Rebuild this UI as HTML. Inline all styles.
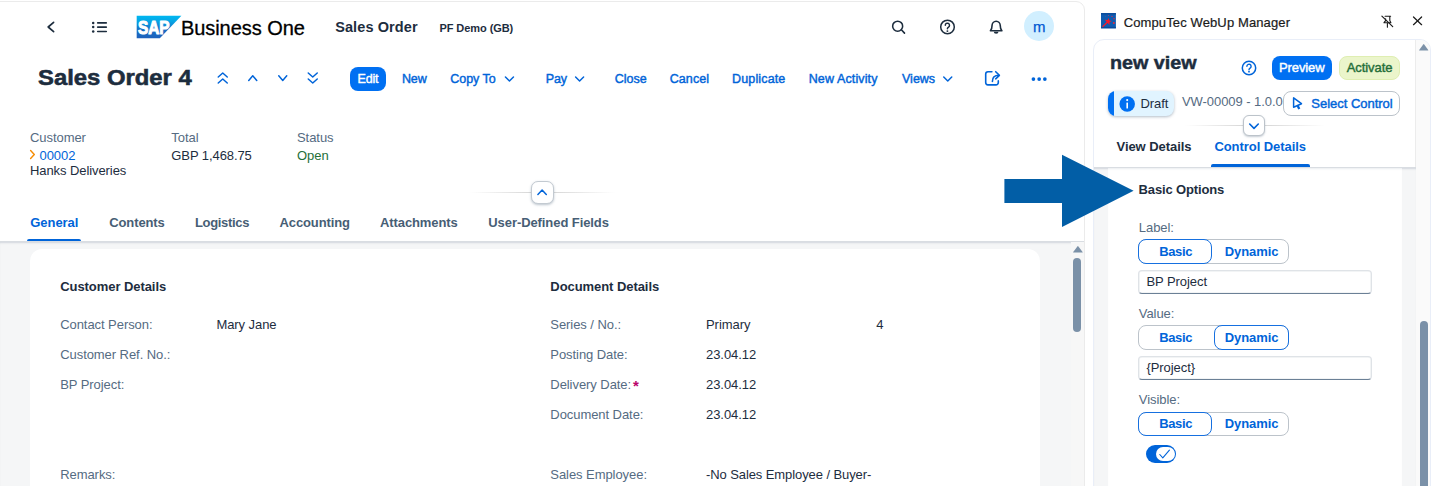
<!DOCTYPE html>
<html><head><meta charset="utf-8"><title>Sales Order</title>
<style>
html,body{margin:0;padding:0;}
body{width:1439px;height:486px;overflow:hidden;position:relative;background:#fff;font-family:"Liberation Sans",sans-serif;}
.b{position:absolute;display:block;}
.t{position:absolute;display:block;white-space:nowrap;line-height:1;letter-spacing:-0.06px;}
svg{overflow:visible;}
</style></head><body>
<div class="b" id="main" style="left:-2px;top:1px;width:1085px;height:600px;background:#fff;border:1px solid #ebebeb;border-top-right-radius:9px;"></div>
<svg class="b" style="left:40px;top:15px;" width="24" height="24" viewBox="0 0 24 24"><polyline points="13.6,7.4 8.2,12 13.6,16.6" fill="none" stroke="#1d2d3e" stroke-width="1.7" stroke-linecap="round" stroke-linejoin="round"/></svg>
<svg class="b" style="left:88px;top:15px;" width="24" height="24" viewBox="0 0 24 24"><g fill="#1d2d3e"><circle cx="5.2" cy="7.9" r="1.25"/><circle cx="5.2" cy="12.1" r="1.25"/><circle cx="5.2" cy="16.4" r="1.25"/></g><g stroke="#1d2d3e" stroke-width="1.6" stroke-linecap="round"><line x1="9.7" y1="7.9" x2="18.3" y2="7.9"/><line x1="9.7" y1="12.15" x2="18.3" y2="12.15"/><line x1="9.7" y1="16.45" x2="18.3" y2="16.45"/></g></svg>
<svg class="b" style="left:136px;top:15px;" width="47" height="24" viewBox="0 0 47 24"><defs><linearGradient id="sg" x1="0" y1="0" x2="0" y2="1"><stop offset="0" stop-color="#00b8f1"/><stop offset="0.25" stop-color="#06a5e5"/><stop offset="0.6" stop-color="#1870c5"/><stop offset="1" stop-color="#1d61bc"/></linearGradient></defs><polygon points="0.7,0.8 45.4,0.8 23.8,23.3 0.7,23.3" fill="url(#sg)"/><text x="1.9" y="19.0" font-family="Liberation Sans, sans-serif" font-weight="bold" font-size="17.6" fill="#fff" textLength="31.6" lengthAdjust="spacingAndGlyphs" stroke="#fff" stroke-width="1.0" stroke-linejoin="round">SAP</text></svg>
<span class="t" style="left:180.90px;top:17.57px;font-size:20px;color:#000;letter-spacing:-0.05px;-webkit-text-stroke:0.3px #000;">Business One</span>
<span class="t" style="left:335.20px;top:19.83px;font-size:14.5px;color:#1d2d3e;font-weight:bold;letter-spacing:0.1px;">Sales Order</span>
<span class="t" style="left:439.40px;top:22.79px;font-size:11px;color:#1d2d3e;font-weight:bold;">PF Demo (GB)</span>
<svg class="b" style="left:888px;top:15px;" width="24" height="24" viewBox="0 0 24 24"><circle cx="9.65" cy="11.15" r="5.0" fill="none" stroke="#1d2d3e" stroke-width="1.55"/><line x1="13.4" y1="14.8" x2="16.5" y2="18.1" stroke="#1d2d3e" stroke-width="1.6" stroke-linecap="round"/></svg>
<svg class="b" style="left:935px;top:15px;" width="24" height="24" viewBox="0 0 24 24"><circle cx="12.5" cy="11.95" r="6.8" fill="none" stroke="#1d2d3e" stroke-width="1.5"/><path d="M10.3 10.3 a2.1 2.1 0 1 1 3.25 1.75 c-0.85 0.55 -1.15 0.95 -1.15 1.75" fill="none" stroke="#1d2d3e" stroke-width="1.45" stroke-linecap="round"/><circle cx="12.4" cy="16.1" r="0.95" fill="#1d2d3e"/></svg>
<svg class="b" style="left:984px;top:15px;" width="24" height="24" viewBox="0 0 24 24"><path d="M6.4 15.8 C7.9 14.3 8.05 13 8.05 10.6 A4.1 4.4 0 0 1 16.25 10.6 C16.25 13 16.4 14.3 17.9 15.8 Z" fill="none" stroke="#1d2d3e" stroke-width="1.6" stroke-linejoin="round"/><path d="M9.8 16.7 A2.35 2.1 0 0 0 14.5 16.7 Z" fill="#1d2d3e"/></svg>
<div class="b" style="left:1023.7px;top:11.3px;width:30.2px;height:30.2px;border-radius:50%;background:#d1efff;"></div>
<span class="t" style="left:1033.00px;top:18.60px;font-size:15px;color:#0057d2;-webkit-text-stroke:0.25px #0057d2;">m</span>
<span class="t" style="left:38.20px;top:67.05px;font-size:21.2px;color:#1d2d3e;font-weight:bold;letter-spacing:0;transform:scaleX(1.125);transform-origin:0 0;-webkit-text-stroke:0.55px #1d2d3e;">Sales Order 4</span>
<svg class="b" style="left:0px;top:0px;pointer-events:none;" width="1085" height="120" viewBox="0 0 1085 120"><polyline points="218.25,77.00 222.75,73.00 227.25,77.00" fill="none" stroke="#0064d9" stroke-width="1.5" stroke-linecap="round" stroke-linejoin="round"/><polyline points="218.25,83.00 222.75,79.00 227.25,83.00" fill="none" stroke="#0064d9" stroke-width="1.5" stroke-linecap="round" stroke-linejoin="round"/><polyline points="248.75,80.40 252.75,75.80 256.75,80.40" fill="none" stroke="#0064d9" stroke-width="1.5" stroke-linecap="round" stroke-linejoin="round"/><polyline points="278.75,75.80 282.75,80.40 286.75,75.80" fill="none" stroke="#0064d9" stroke-width="1.5" stroke-linecap="round" stroke-linejoin="round"/><polyline points="308.25,73.00 312.75,77.00 317.25,73.00" fill="none" stroke="#0064d9" stroke-width="1.5" stroke-linecap="round" stroke-linejoin="round"/><polyline points="308.25,79.00 312.75,83.00 317.25,79.00" fill="none" stroke="#0064d9" stroke-width="1.5" stroke-linecap="round" stroke-linejoin="round"/><polyline points="505.45,77.05 509.45,80.95 513.45,77.05" fill="none" stroke="#0064d9" stroke-width="1.5" stroke-linecap="round" stroke-linejoin="round"/><polyline points="575.60,77.05 579.60,80.95 583.60,77.05" fill="none" stroke="#0064d9" stroke-width="1.5" stroke-linecap="round" stroke-linejoin="round"/><polyline points="943.75,77.05 947.75,80.95 951.75,77.05" fill="none" stroke="#0064d9" stroke-width="1.5" stroke-linecap="round" stroke-linejoin="round"/></svg>
<div class="b" style="left:349.6px;top:66.8px;width:36.8px;height:24.5px;border-radius:8px;background:#0070f2;"></div>
<span class="t" style="left:357.50px;top:72.92px;font-size:12.5px;color:#fff;-webkit-text-stroke:0.42px currentColor;letter-spacing:-0.2px;">Edit</span>
<span class="t" style="left:401.90px;top:72.92px;font-size:12.5px;color:#0064d9;-webkit-text-stroke:0.42px currentColor;letter-spacing:-0.1px;">New</span>
<span class="t" style="left:450.20px;top:72.92px;font-size:12.5px;color:#0064d9;-webkit-text-stroke:0.42px currentColor;letter-spacing:0px;">Copy To</span>
<span class="t" style="left:545.80px;top:72.92px;font-size:12.5px;color:#0064d9;-webkit-text-stroke:0.42px currentColor;letter-spacing:-0.2px;">Pay</span>
<span class="t" style="left:614.70px;top:72.92px;font-size:12.5px;color:#0064d9;-webkit-text-stroke:0.42px currentColor;letter-spacing:0px;">Close</span>
<span class="t" style="left:669.70px;top:72.92px;font-size:12.5px;color:#0064d9;-webkit-text-stroke:0.42px currentColor;letter-spacing:0.1px;">Cancel</span>
<span class="t" style="left:732.00px;top:72.92px;font-size:12.5px;color:#0064d9;-webkit-text-stroke:0.42px currentColor;letter-spacing:0.15px;">Duplicate</span>
<span class="t" style="left:808.70px;top:72.92px;font-size:12.5px;color:#0064d9;-webkit-text-stroke:0.42px currentColor;letter-spacing:0.12px;">New Activity</span>
<span class="t" style="left:902.00px;top:72.92px;font-size:12.5px;color:#0064d9;-webkit-text-stroke:0.42px currentColor;letter-spacing:0px;">Views</span>
<svg class="b" style="left:982px;top:68px;" width="20" height="20" viewBox="0 0 20 20"><path d="M9.9 3.8 H6 a2.3 2.3 0 0 0 -2.3 2.3 V14.6 a2.3 2.3 0 0 0 2.3 2.3 H14 a2.3 2.3 0 0 0 2.3 -2.3 V12.9" fill="none" stroke="#0064d9" stroke-width="1.6" stroke-linecap="round"/><path d="M10.4 13.4 C10.4 9.4 12.6 7.3 17 7.3 M13.7 3.7 L17.4 7.3 L13.7 10.8" fill="none" stroke="#0064d9" stroke-width="1.6" stroke-linecap="round" stroke-linejoin="round"/></svg>
<svg class="b" style="left:1029px;top:73px;" width="20" height="12" viewBox="0 0 20 12"><g fill="#0064d9"><circle cx="4.4" cy="6.05" r="1.85"/><circle cx="10.15" cy="6.05" r="1.85"/><circle cx="15.85" cy="6.05" r="1.85"/></g></svg>
<span class="t" style="left:30.00px;top:130.80px;font-size:13px;color:#556b82;">Customer</span>
<span class="t" style="left:171.30px;top:130.80px;font-size:13px;color:#556b82;">Total</span>
<span class="t" style="left:297.00px;top:130.80px;font-size:13px;color:#556b82;">Status</span>
<svg class="b" style="left:29px;top:149px;" width="8" height="12" viewBox="0 0 8 12"><polyline points="1.6,1.6 5.3,5.6 1.6,9.6" fill="none" stroke="#f58b00" stroke-width="1.4" stroke-linecap="round" stroke-linejoin="round"/></svg>
<span class="t" style="left:39.50px;top:149.00px;font-size:13px;color:#0064d9;">00002</span>
<span class="t" style="left:171.30px;top:149.00px;font-size:13px;color:#1d2d3e;letter-spacing:-0.08px;">GBP 1,468.75</span>
<span class="t" style="left:297.00px;top:149.00px;font-size:13px;color:#256f3a;">Open</span>
<span class="t" style="left:30.00px;top:164.00px;font-size:13px;color:#1d2d3e;letter-spacing:-0.08px;">Hanks Deliveries</span>
<div class="b" style="left:470px;top:191.8px;width:145px;height:1px;background:linear-gradient(90deg,rgba(217,217,217,0),#d9d9d9 40%,#d9d9d9 60%,rgba(217,217,217,0));"></div>
<div class="b" style="left:531.2px;top:181.2px;width:22.4px;height:22.4px;box-sizing:border-box;border:1px solid #c3cad1;border-radius:7px;background:#fff;box-shadow:0 1px 2.5px rgba(85,107,130,.4);"></div>
<svg class="b" style="left:531.3px;top:181.3px;" width="22" height="22" viewBox="0 0 22 22"><polyline points="6.90,13.50 11.10,9.10 15.30,13.50" fill="none" stroke="#0064d9" stroke-width="1.5" stroke-linecap="round" stroke-linejoin="round"/></svg>
<span class="t" style="left:30.30px;top:215.70px;font-size:13px;color:#0064d9;font-weight:bold;">General</span>
<span class="t" style="left:109.20px;top:215.70px;font-size:13px;color:#475e75;font-weight:bold;letter-spacing:-0.1px;">Contents</span>
<span class="t" style="left:195.00px;top:215.70px;font-size:13px;color:#475e75;font-weight:bold;letter-spacing:-0.33px;">Logistics</span>
<span class="t" style="left:279.50px;top:215.70px;font-size:13px;color:#475e75;font-weight:bold;letter-spacing:-0.12px;">Accounting</span>
<span class="t" style="left:380.00px;top:215.70px;font-size:13px;color:#475e75;font-weight:bold;letter-spacing:-0.1px;">Attachments</span>
<span class="t" style="left:488.30px;top:215.70px;font-size:13px;color:#475e75;font-weight:bold;letter-spacing:-0.08px;">User-Defined Fields</span>
<div class="b" style="left:27.2px;top:238.6px;width:54.2px;height:2.6px;background:#0064d9;border-radius:2px 2px 0 0;"></div>
<div class="b" style="left:0px;top:240.8px;width:1084px;height:260px;background:#f5f6f7;box-shadow:inset 0 2px 2px -1px rgba(85,107,130,.22);border-top:1px solid #d9dde2;box-sizing:border-box;"></div>
<div class="b" style="left:30px;top:249px;width:1010px;height:260px;background:#fff;border-radius:12px;"></div>
<div class="b" style="left:1071px;top:242px;width:13px;height:260px;background:#f7f7f7;"></div>
<svg class="b" style="left:1071px;top:244px;" width="13" height="10" viewBox="0 0 13 10"><path d="M2.2 8 L6.4 2.4 Q6.9 1.8 7.4 2.4 L11.6 8 Q11.9 8.5 11.2 8.5 H2.6 Q1.9 8.5 2.2 8 z" fill="#7b91a8"/></svg>
<div class="b" style="left:1073px;top:258.4px;width:8px;height:73.3px;background:#7b91a8;border-radius:4px;"></div>
<span class="t" style="left:60.20px;top:280.10px;font-size:13px;color:#1d2d3e;font-weight:bold;">Customer Details</span>
<span class="t" style="left:60.20px;top:318.10px;font-size:13px;color:#556b82;">Contact Person:</span>
<span class="t" style="left:216.40px;top:318.10px;font-size:13px;color:#1d2d3e;">Mary Jane</span>
<span class="t" style="left:60.20px;top:347.90px;font-size:13px;color:#556b82;">Customer Ref. No.:</span>
<span class="t" style="left:60.20px;top:377.60px;font-size:13px;color:#556b82;">BP Project:</span>
<span class="t" style="left:60.20px;top:467.90px;font-size:13px;color:#556b82;">Remarks:</span>
<span class="t" style="left:550.30px;top:280.10px;font-size:13px;color:#1d2d3e;font-weight:bold;">Document Details</span>
<span class="t" style="left:550.30px;top:318.10px;font-size:13px;color:#556b82;">Series / No.:</span>
<span class="t" style="left:706.00px;top:318.10px;font-size:13px;color:#1d2d3e;">Primary</span>
<span class="t" style="left:876.30px;top:318.10px;font-size:13px;color:#1d2d3e;">4</span>
<span class="t" style="left:550.30px;top:347.90px;font-size:13px;color:#556b82;">Posting Date:</span>
<span class="t" style="left:706.00px;top:347.90px;font-size:13px;color:#1d2d3e;">23.04.12</span>
<span class="t" style="left:550.30px;top:377.60px;font-size:13px;color:#556b82;">Delivery Date:</span>
<span class="t" style="left:633.00px;top:377.70px;font-size:15px;color:#ba066c;font-weight:bold;">*</span>
<span class="t" style="left:706.00px;top:377.60px;font-size:13px;color:#1d2d3e;">23.04.12</span>
<span class="t" style="left:550.30px;top:407.60px;font-size:13px;color:#556b82;">Document Date:</span>
<span class="t" style="left:706.00px;top:407.60px;font-size:13px;color:#1d2d3e;">23.04.12</span>
<span class="t" style="left:550.30px;top:467.90px;font-size:13px;color:#556b82;">Sales Employee:</span>
<span class="t" style="left:706.00px;top:467.90px;font-size:13px;color:#1d2d3e;letter-spacing:-0.09px;">-No Sales Employee / Buyer-</span>
<svg class="b" style="left:1101px;top:13px;" width="16" height="16" viewBox="0 0 16 16"><rect x="0" y="0.1" width="14.9" height="15.2" fill="#0f5bb0"/><rect x="0" y="0.1" width="14.9" height="1.4" fill="#0b4a9a"/><rect x="0" y="13.9" width="14.9" height="1.4" fill="#0b4a9a"/><polygon points="7.87,4.88 8.29,7.43 10.78,8.11 8.49,9.30 8.60,11.88 6.77,10.07 4.35,10.98 5.51,8.67 3.90,6.65 6.45,7.04" fill="#f5192a"/><line x1="5.6" y1="10" x2="1.5" y2="13.8" stroke="#f5192a" stroke-width="1.2"/><circle cx="13.1" cy="5.7" r="0.75" fill="#e8283a"/><circle cx="12.8" cy="9.9" r="1.0" fill="#e8283a"/><circle cx="11" cy="3.4" r="0.7" fill="#d83048"/><circle cx="7.6" cy="2.5" r="0.5" fill="#c83a58"/><circle cx="4.7" cy="3.3" r="0.4" fill="#a04070"/></svg>
<span class="t" style="left:1123.70px;top:15.50px;font-size:13px;color:#1b1b1b;letter-spacing:0.12px;-webkit-text-stroke:0.2px #1b1b1b;">CompuTec WebUp Manager</span>
<svg class="b" style="left:1378px;top:12px;" width="20" height="20" viewBox="0 0 20 20"><g fill="none" stroke="#1b1b1b" stroke-width="1.1" stroke-linecap="round" stroke-linejoin="round"><path d="M7.1 4.2 H12.6 M11.8 4.2 V8.6 L12.9 10.7 H6 L7.6 8.6 V6.8 M9.4 10.7 V15.3"/><line x1="3.9" y1="4.1" x2="14.7" y2="14.6" stroke-width="1.2"/></g></svg>
<svg class="b" style="left:1410px;top:13px;" width="16" height="16" viewBox="0 0 16 16"><g stroke="#1b1b1b" stroke-width="1.25" stroke-linecap="round"><line x1="3.5" y1="4" x2="11.6" y2="11.7"/><line x1="11.6" y1="4" x2="3.5" y2="11.7"/></g></svg>
<div class="b" id="inner" style="left:1093px;top:39px;width:337.6px;height:470px;box-sizing:border-box;border:1px solid #e9eef8;border-radius:11px 11px 0 0;background:#fff;overflow:hidden;"><div style="position:absolute;left:321.4px;top:0;width:15px;height:100%;background:#fafafa;border-left:1px solid #ececec;box-sizing:border-box;"></div></div>
<div class="b" style="left:1094px;top:166.6px;width:321.5px;height:330px;background:#f5f6f7;border-top:1px solid #d9dde2;box-sizing:border-box;box-shadow:inset 0 2px 2px -1px rgba(85,107,130,.22);"></div>
<div class="b" style="left:1108.3px;top:167.6px;width:293.5px;height:330px;background:#fff;box-shadow:inset 0 2px 2px -1px rgba(85,107,130,.12);"></div>
<svg class="b" style="left:1417px;top:42px;" width="13" height="10" viewBox="0 0 13 10"><path d="M2.2 8 L6.2 2.4 Q6.7 1.8 7.2 2.4 L11.2 8 Q11.5 8.5 10.8 8.5 H2.6 Q1.9 8.5 2.2 8 z" fill="#7b91a8"/></svg>
<div class="b" style="left:1419.8px;top:321px;width:7.8px;height:180px;background:#7b91a8;border-radius:4px;"></div>
<span class="t" style="left:1109.50px;top:53.79px;font-size:18.2px;color:#1d2d3e;font-weight:bold;letter-spacing:0;transform:scaleX(1.085);transform-origin:0 0;-webkit-text-stroke:0.45px #1d2d3e;">new view</span>
<svg class="b" style="left:1240px;top:59px;" width="18" height="18" viewBox="0 0 18 18"><circle cx="9" cy="9" r="6.7" fill="none" stroke="#0064d9" stroke-width="1.5"/><path d="M6.9 7.3 a2.1 2.1 0 1 1 3.2 1.8 c-0.8 0.5 -1.1 0.9 -1.1 1.7" fill="none" stroke="#0064d9" stroke-width="1.4" stroke-linecap="round"/><circle cx="9" cy="12.7" r="0.9" fill="#0064d9"/></svg>
<div class="b" style="left:1271.6px;top:55.8px;width:60.3px;height:24.4px;border-radius:8px;background:#0070f2;"></div>
<span class="t" style="left:1279.00px;top:61.20px;font-size:13px;color:#fff;-webkit-text-stroke:0.42px currentColor;letter-spacing:-0.1px;">Preview</span>
<div class="b" style="left:1339px;top:55.8px;width:61.2px;height:24.4px;border-radius:8px;background:#ebf5cb;box-sizing:border-box;border:1px solid #dfeeb2;"></div>
<span class="t" style="left:1346.70px;top:61.20px;font-size:13px;color:#256f3a;-webkit-text-stroke:0.42px currentColor;letter-spacing:-0.06px;">Activate</span>
<div class="b" style="left:1108.2px;top:91.3px;width:66px;height:24.5px;border-radius:8px;background:#e1f4ff;box-shadow:0 1px 3px rgba(85,107,130,.45);overflow:hidden;"><div style="position:absolute;left:0;top:0;width:5.6px;height:100%;background:#0070f2;"></div></div>
<svg class="b" style="left:1119px;top:95.5px;" width="16" height="16" viewBox="0 0 16 16"><circle cx="8.2" cy="8" r="7.75" fill="#0070f2"/><rect x="7.4" y="6.4" width="1.6" height="6" rx="0.5" fill="#fff"/><circle cx="8.2" cy="4.1" r="1.05" fill="#fff"/></svg>
<span class="t" style="left:1140.50px;top:96.60px;font-size:13px;color:#1d2d3e;">Draft</span>
<span class="t" style="left:1182.00px;top:95.40px;font-size:13px;color:#556b82;letter-spacing:-0.06px;">VW-00009 - 1.0.0</span>
<div class="b" style="left:1283px;top:91.4px;width:117px;height:24.4px;border-radius:8px;background:#fff;box-sizing:border-box;border:1px solid #bcc3ca;"></div>
<svg class="b" style="left:1290px;top:95px;" width="16" height="16" viewBox="0 0 16 16"><path d="M3.6 2.9 L3.6 12.3 L11.5 8.7 Z" fill="none" stroke="#0064d9" stroke-width="1.5" stroke-linejoin="round"/><line x1="7.7" y1="10.9" x2="9.3" y2="14" stroke="#0064d9" stroke-width="2.3" stroke-linecap="butt"/></svg>
<span class="t" style="left:1311.30px;top:96.90px;font-size:13px;color:#0064d9;-webkit-text-stroke:0.42px currentColor;letter-spacing:-0.02px;">Select Control</span>
<div class="b" style="left:1185px;top:125px;width:140px;height:1px;background:linear-gradient(90deg,rgba(217,217,217,0),#d9d9d9 40%,#d9d9d9 60%,rgba(217,217,217,0));"></div>
<div class="b" style="left:1243.4px;top:114.5px;width:22px;height:21.5px;box-sizing:border-box;border:1px solid #bcc3ca;border-radius:6px;background:#fff;box-shadow:0 1px 2px rgba(85,107,130,.35);"></div>
<svg class="b" style="left:1243.4px;top:114.5px;" width="22" height="22" viewBox="0 0 22 22"><polyline points="6.70,9.00 11.00,13.40 15.30,9.00" fill="none" stroke="#0064d9" stroke-width="1.6" stroke-linecap="round" stroke-linejoin="round"/></svg>
<span class="t" style="left:1116.50px;top:139.90px;font-size:13px;color:#1d2d3e;font-weight:bold;">View Details</span>
<span class="t" style="left:1214.40px;top:139.90px;font-size:13px;color:#0064d9;font-weight:bold;">Control Details</span>
<div class="b" style="left:1211.3px;top:164px;width:98.7px;height:2.8px;background:#0064d9;border-radius:2px 2px 0 0;"></div>
<span class="t" style="left:1138.60px;top:183.40px;font-size:13px;color:#1d2d3e;font-weight:bold;letter-spacing:-0.15px;">Basic Options</span>
<span class="t" style="left:1138.80px;top:221.10px;font-size:13px;color:#556b82;">Label:</span>
<div class="b" style="left:1138.3px;top:239.1px;width:150.6px;height:24.6px;box-sizing:border-box;border:1px solid #bcc3ca;border-radius:8px;background:#fff;"></div>
<div class="b" style="left:1138.3px;top:239.1px;width:74.2px;height:24.6px;box-sizing:border-box;border:1px solid #1670e0;border-radius:8px;background:#fff;"></div>
<span class="t" style="left:1159.30px;top:244.70px;font-size:13px;color:#0064d9;font-weight:bold;letter-spacing:-0.4px;">Basic</span>
<span class="t" style="left:1224.70px;top:244.70px;font-size:13px;color:#0064d9;font-weight:bold;letter-spacing:-0.05px;">Dynamic</span>
<div class="b" style="left:1138.3px;top:269.6px;width:233.3px;height:24.2px;box-sizing:border-box;border:1px solid #dfe3e7;border-bottom:1px solid #6b8096;border-radius:4px;background:#fff;box-shadow:inset 0 0 0 0.5px rgba(85,107,130,.15);"></div>
<span class="t" style="left:1146.40px;top:274.90px;font-size:13px;color:#1d2d3e;">BP Project</span>
<span class="t" style="left:1138.80px;top:307.10px;font-size:13px;color:#556b82;">Value:</span>
<div class="b" style="left:1138.3px;top:325.3px;width:150.6px;height:24.6px;box-sizing:border-box;border:1px solid #bcc3ca;border-radius:8px;background:#fff;"></div>
<div class="b" style="left:1214px;top:325.3px;width:74.89999999999986px;height:24.6px;box-sizing:border-box;border:1px solid #1670e0;border-radius:8px;background:#fff;"></div>
<span class="t" style="left:1159.30px;top:330.90px;font-size:13px;color:#0064d9;font-weight:bold;letter-spacing:-0.4px;">Basic</span>
<span class="t" style="left:1224.70px;top:330.90px;font-size:13px;color:#0064d9;font-weight:bold;letter-spacing:-0.05px;">Dynamic</span>
<div class="b" style="left:1138.3px;top:355.8px;width:233.3px;height:24.2px;box-sizing:border-box;border:1px solid #dfe3e7;border-bottom:1px solid #6b8096;border-radius:4px;background:#fff;box-shadow:inset 0 0 0 0.5px rgba(85,107,130,.15);"></div>
<span class="t" style="left:1146.40px;top:361.10px;font-size:13px;color:#1d2d3e;">{Project}</span>
<span class="t" style="left:1138.80px;top:393.40px;font-size:13px;color:#556b82;">Visible:</span>
<div class="b" style="left:1138.3px;top:411.6px;width:150.6px;height:24.6px;box-sizing:border-box;border:1px solid #bcc3ca;border-radius:8px;background:#fff;"></div>
<div class="b" style="left:1138.3px;top:411.6px;width:74.2px;height:24.6px;box-sizing:border-box;border:1px solid #1670e0;border-radius:8px;background:#fff;"></div>
<span class="t" style="left:1159.30px;top:417.20px;font-size:13px;color:#0064d9;font-weight:bold;letter-spacing:-0.4px;">Basic</span>
<span class="t" style="left:1224.70px;top:417.20px;font-size:13px;color:#0064d9;font-weight:bold;letter-spacing:-0.05px;">Dynamic</span>
<div class="b" style="left:1145.9px;top:444.5px;width:30.1px;height:18.9px;border-radius:10px;background:#0064d9;"></div>
<div class="b" style="left:1155.5px;top:446.5px;width:19.1px;height:14.9px;border-radius:8px;background:#fff;"></div>
<svg class="b" style="left:1155px;top:446px;" width="20" height="16" viewBox="0 0 20 16"><polyline points="4.8,8.5 7.8,11.8 14.4,4.2" fill="none" stroke="#0064d9" stroke-width="1.1" stroke-linecap="round" stroke-linejoin="round"/></svg>
<svg class="b" style="left:1000px;top:150px;" width="140" height="82" viewBox="0 0 140 82"><polygon points="4.4,28.9 62,28.9 62,4.8 133.6,40.7 62,77 62,53 4.4,53" fill="#025ea6"/></svg>
</body></html>
